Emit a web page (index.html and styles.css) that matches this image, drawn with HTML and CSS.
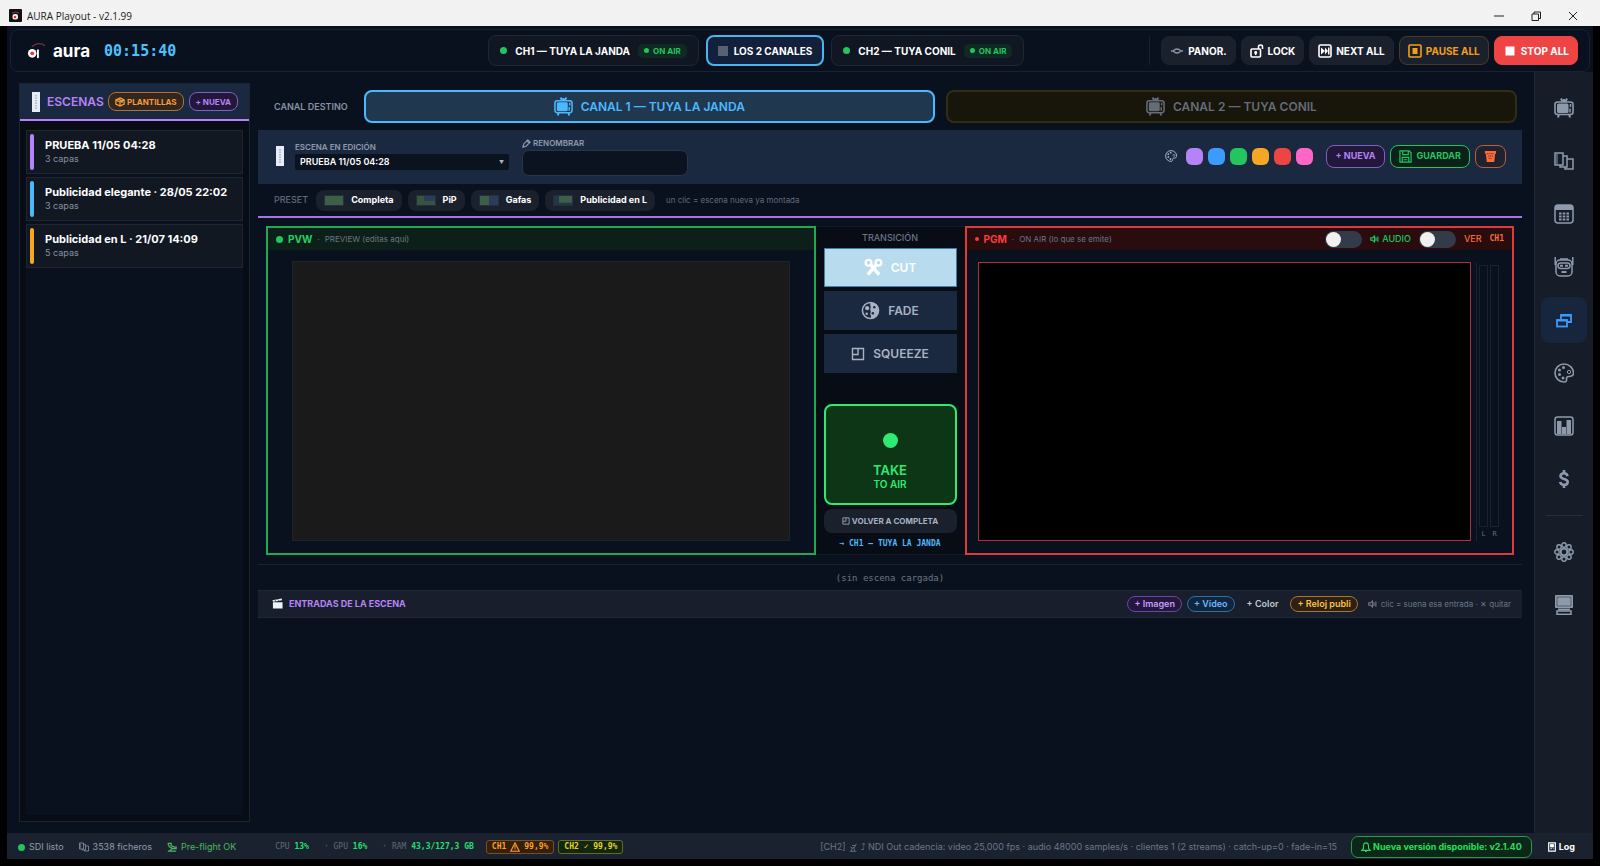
FILE: index.html
```html
<!DOCTYPE html>
<html lang="es">
<head>
  <meta charset="UTF-8">
  <title>AURA Playout - v2.1.99</title>
  <link rel="stylesheet" href="styles.css">
</head>
<body>
  <!-- Icon set -->
  <svg class="icon-set" aria-hidden="true">
    <symbol id="i-tv" viewBox="0 0 20 20">
      <path d="M7 .5l1.500 3M13 .5l-1.500 3M10 1v3M5 16l-1 3.500M15 16l1 3.500" fill="none" stroke="currentColor" stroke-width="2"/>
      <rect x="1" y="4" width="18" height="12.500" rx="2.500" fill="none" stroke="currentColor" stroke-width="1.600"/>
      <rect x="3" y="5.500" width="11.500" height="9.500" rx="1.500" fill="currentColor"/>
      <path d="M16.500 6v3M16 10.500v4" stroke="currentColor" stroke-width="1.500"/>
    </symbol>
    <symbol id="i-layers" viewBox="0 0 20 20">
      <path d="M1 2h8v12H1zM9 5h4v11H6v-2M13 8h6v10h-8v-2" fill="none" stroke="currentColor" stroke-width="1.500"/>
      <path d="M3 3v10" stroke="currentColor"/>
    </symbol>
    <symbol id="i-calendar" viewBox="0 0 20 20">
      <rect x="1" y="1" width="18" height="18" rx="3" fill="none" stroke="currentColor" stroke-width="1.500"/>
      <path d="M1 3q0-2 2-2h14q2 0 2 2v3H1z" fill="currentColor"/>
      <path d="M5 9.500h10M5 12.500h10M5 15.500h10" stroke="currentColor" stroke-width="2.200" stroke-dasharray="2.600 1.100"/>
    </symbol>
    <symbol id="i-robot" viewBox="0 0 20 20">
      <path d="M1.200 0v8M18.800 0v8M6 2h8" fill="none" stroke="currentColor" stroke-width="1.500"/>
      <rect x="2" y="3" width="16" height="16" rx="4" fill="none" stroke="currentColor" stroke-width="1.500"/>
      <rect x="4" y="6" width="12" height="5.500" rx="2.700" fill="none" stroke="currentColor" stroke-width="1.500"/>
      <path d="M6 8.700h3M11 8.700h3M7.500 15h5" stroke="currentColor" stroke-width="2"/>
    </symbol>
    <symbol id="i-windows" viewBox="0 0 20 20">
      <path d="M7 9V5h10v7h-4" fill="none" stroke="currentColor" stroke-width="1.800"/>
      <rect x="3" y="10" width="10" height="6.500" fill="none" stroke="currentColor" stroke-width="1.800"/>
      <path d="M7 5.500h10M3 10.500h10" stroke="currentColor" stroke-width="2"/>
    </symbol>
    <symbol id="i-palette" viewBox="0 0 20 20">
      <path d="M10 1C5 1 1 5 1 10s4 9 9 9c3 0 2.500-2 2.500-3.500 0-1.500 1-2 2.500-2 3 0 4.500-1.500 4.500-3.500C19.500 5 15 1 10 1z" fill="none" stroke="currentColor" stroke-width="1.600"/>
      <g fill="currentColor"><circle cx="5.500" cy="7" r="1.500"/><circle cx="9.500" cy="4.500" r="1.500"/><circle cx="5.500" cy="11.500" r="1.500"/><circle cx="9" cy="15" r="1.500"/></g>
      <circle cx="15" cy="9" r="1.700" fill="none" stroke="currentColor"/>
    </symbol>
    <symbol id="i-chart" viewBox="0 0 20 20">
      <rect x="1" y="1" width="18" height="18" rx="2.500" fill="none" stroke="currentColor" stroke-width="1.500"/>
      <path d="M3 5h4.500v13H3zM8 11h4v7H8zM12.500 4H17v14h-4.500z" fill="currentColor"/>
    </symbol>
    <symbol id="i-dollar" viewBox="0 0 20 20">
      <path d="M13.500 7.200c-.3-2-1.600-3-3.500-3S6.500 5.200 6.500 7c0 4 7.200 2 7.200 6 0 2-1.700 2.900-3.700 2.900s-3.500-1-3.800-3M10 1v3M10 16v3" fill="none" stroke="currentColor" stroke-width="2.600"/>
    </symbol>
    <symbol id="i-gear" viewBox="0 0 20 20">
      <circle cx="10" cy="10" r="3.300" fill="none" stroke="currentColor" stroke-width="1.800"/>
      <g fill="none" stroke="currentColor" stroke-width="1.400"><circle cx="10" cy="3" r="2.200"/><circle cx="15" cy="5" r="2.200"/><circle cx="17" cy="10" r="2.200"/><circle cx="15" cy="15" r="2.200"/><circle cx="10" cy="17" r="2.200"/><circle cx="5" cy="15" r="2.200"/><circle cx="3" cy="10" r="2.200"/><circle cx="5" cy="5" r="2.200"/></g>
    </symbol>
    <symbol id="i-computer" viewBox="0 0 20 20">
      <rect x="1" y="0" width="18" height="13" rx="1" fill="currentColor"/>
      <path d="M3 2h14v9H3z" fill="none" stroke="#161c28" stroke-width=".5"/>
      <path d="M4 13.500h12v2H4z" fill="currentColor"/>
      <rect x="3" y="16" width="14" height="3.300" fill="none" stroke="currentColor" stroke-width="1.500"/>
    </symbol>
    <symbol id="i-scene" viewBox="0 0 8 20">
      <rect width="8" height="20" fill="#e6edf6"/>
      <path d="M4 3v14" stroke="#b4c0d0" stroke-width="2" stroke-dasharray="1.500 1"/>
    </symbol>
    <symbol id="i-box" viewBox="0 0 12 12">
      <path d="M6 1l5 2.500v5L6 11 1 8.500v-5zM1 3.500L6 6l5-2.500M6 6v5M3.500 2.300l5 2.500v2.500" fill="none" stroke="currentColor" stroke-width="1.500"/>
    </symbol>
    <symbol id="i-view" viewBox="0 0 14 14">
      <path d="M1 7h2q4-4 8 0h2M3 7q4 4 8 0" fill="none" stroke="currentColor" stroke-width="1.300"/>
    </symbol>
    <symbol id="i-lock" viewBox="0 0 14 14">
      <rect x="1" y="5" width="9.500" height="8" rx="1" fill="none" stroke="currentColor" stroke-width="1.600"/>
      <path d="M8.500 5V2.500q0-1.500 2-1.500t2 1.500V5M5.700 7v4" fill="none" stroke="currentColor" stroke-width="1.500"/>
      <circle cx="5.700" cy="8.500" r="1.500" fill="currentColor"/>
    </symbol>
    <symbol id="i-next" viewBox="0 0 14 14">
      <rect x="1" y="1" width="12" height="12" rx="1.500" fill="none" stroke="currentColor" stroke-width="1.600"/>
      <path d="M3 3.500L7 7l-4 3.500zM7 3.500L10 7l-3 3.500zM10 3.500h1.500v7H10z" fill="currentColor"/>
    </symbol>
    <symbol id="i-pause" viewBox="0 0 14 14">
      <rect x="1" y="1" width="12" height="12" rx="1" fill="none" stroke="currentColor" stroke-width="1.600"/>
      <path d="M4.500 4h5v6h-5z" fill="currentColor"/>
    </symbol>
    <symbol id="i-stop" viewBox="0 0 14 14"><path d="M2.500 2.500h9v9h-9z" fill="currentColor"/></symbol>
    <symbol id="i-pencil" viewBox="0 0 10 10">
      <path d="M1 9l1-3.500 4.500-4.500 2.500 2.500L4.500 8z M5.500 2L8 4.500" fill="none" stroke="currentColor" stroke-width="1.300"/>
    </symbol>
    <symbol id="i-save" viewBox="0 0 14 14">
      <path d="M1 1h10l2 2v10H1zM4 1v4h6V1M3.500 13V8h7v5M5 10.500h4" fill="none" stroke="currentColor" stroke-width="1.300"/>
    </symbol>
    <symbol id="i-trash" viewBox="0 0 14 14">
      <path d="M1 1h12v3h-1l-1 9H3L2 4H1z" fill="currentColor"/>
      <path d="M4.500 6.500h5M5 9h4M3 4h8" stroke="#20222f" stroke-width=".8" stroke-dasharray="1.200 .8"/>
    </symbol>
    <symbol id="i-scissors" viewBox="0 0 20 20">
      <g fill="none" stroke="currentColor" stroke-width="2.400"><circle cx="4.800" cy="5" r="3"/><circle cx="15.200" cy="5" r="3"/><path d="M7 7l9 10.500M13 7L4 17.500" stroke-width="3.600"/></g>
    </symbol>
    <symbol id="i-moon" viewBox="0 0 20 20">
      <circle cx="10" cy="10" r="8.500" fill="none" stroke="currentColor" stroke-width="1.600"/>
      <path d="M10 1.500a8.500 8.500 0 010 17c2-3-1-4 0-6s-1-3 0-5-1-3 0-6z" fill="currentColor"/>
      <circle cx="6.500" cy="7.500" r="2.200" fill="currentColor"/><circle cx="6" cy="13.500" r="1.300" fill="currentColor"/>
      <g fill="#1b2940"><circle cx="14" cy="6.500" r="1.300"/><circle cx="12.500" cy="13" r="1.300"/></g>
    </symbol>
    <symbol id="i-squeeze" viewBox="0 0 14 14">
      <path d="M1.500 1.500h11v11h-11zM1.500 7.500h5.500v-6" fill="none" stroke="currentColor" stroke-width="1.400"/>
    </symbol>
    <symbol id="i-speaker" viewBox="0 0 12 10">
      <path d="M1 3.500h2L6 1v8L3 6.500H1zM8 2.500v5M10.500 1.500v7" fill="none" stroke="currentColor" stroke-width="1.500"/>
    </symbol>
    <symbol id="i-clapper" viewBox="0 0 12 12">
      <path d="M1 4.500h10.500v7H1zM.500 2.500L10.500.500l.5 2L1 4z" fill="#eef3fa"/>
      <path d="M3 2l1.500 1.800M6 1.300l1.500 1.800" stroke="#5c6880"/>
    </symbol>
    <symbol id="i-plane" viewBox="0 0 12 12">
      <path d="M1 1.500h4v3l4 1.500h2v2H7L3 6M1 2l2 4M1 11h10M6 8l-3 3" fill="none" stroke="currentColor" stroke-width="1.500"/>
    </symbol>
    <symbol id="i-signal" viewBox="0 0 12 12">
      <path d="M2 10h8M4 10l1-4M3 5q2 2 5 0l2-4M5 3h4M7 5l1 5" fill="none" stroke="currentColor"/>
    </symbol>
    <symbol id="i-bell" viewBox="0 0 12 12">
      <path d="M1 10h10L9 7.500V5Q9 1 6 1T3 5v2.500zM5 11.300h2" fill="none" stroke="currentColor" stroke-width="1.300"/>
    </symbol>
    <symbol id="i-warn" viewBox="0 0 12 12">
      <path d="M6 1l5 10H1zM6 4v4M6 9v1" fill="none" stroke="currentColor" stroke-width="1.300"/>
    </symbol>
    <symbol id="i-log" viewBox="0 0 10 12">
      <path d="M1 1h8v10H1z" fill="none" stroke="currentColor" stroke-width="1.400"/>
      <path d="M3 3h4v3H3zM3 8h2M6 8h1" stroke="currentColor" fill="currentColor"/>
    </symbol>
  </svg>

  <!-- Window title bar -->
  <div class="titlebar">
    <svg class="title-icon" viewBox="0 0 13 13"><rect width="13" height="13" rx="1" fill="#111"/><path d="M3 4q4-2 7 0" fill="none" stroke="#a33"/><rect x="3.500" y="5" width="5.500" height="5.500" rx="2" fill="#eee"/><circle cx="6" cy="8" r="1.300" fill="#d33"/></svg>
    <span class="title-text">AURA Playout - v2.1.99</span>
    <div class="window-buttons">
      <button aria-label="Minimizar"><svg viewBox="0 0 10 10"><path d="M0 5h10"/></svg></button>
      <button aria-label="Restaurar"><svg viewBox="0 0 10 10"><path d="M1 3h6.500v6.500H1zM3 3V1h6.500v6.500h-2"/></svg></button>
      <button aria-label="Cerrar"><svg viewBox="0 0 10 10"><path d="M1 1l8 8M9 1l-8 8"/></svg></button>
    </div>
  </div>

  <div class="app">
    <header class="topbar">
      <div class="brand">
        <svg class="logo" viewBox="0 0 20 20"><path d="M5 6q7-6 14-1" fill="none" stroke="#7c2f34" stroke-width="1.300"/><circle cx="5.500" cy="13" r="4.500" fill="#fff"/><circle cx="5.500" cy="13" r="2" fill="#e23b3b"/><path d="M11.500 9v9" stroke="#fff" stroke-width="2"/></svg>
        <span class="brand-name">aura</span>
        <span class="clock">00:15:40</span>
      </div>
      <nav class="channels">
        <button class="channel-tab"><i class="dot"></i>CH1 — TUYA LA JANDA<span class="on-air"><i></i>ON AIR</span></button>
        <button class="channel-tab active"><i class="square"></i>LOS 2 CANALES</button>
        <button class="channel-tab"><i class="dot"></i>CH2 — TUYA CONIL<span class="on-air"><i></i>ON AIR</span></button>
      </nav>
      <div class="actions">
        <button class="action"><svg class="dim"><use href="#i-view"/></svg>PANOR.</button>
        <button class="action"><svg><use href="#i-lock"/></svg>LOCK</button>
        <button class="action"><svg><use href="#i-next"/></svg>NEXT ALL</button>
        <button class="action pause"><svg><use href="#i-pause"/></svg>PAUSE ALL</button>
        <button class="action stop"><svg><use href="#i-stop"/></svg>STOP ALL</button>
      </div>
    </header>

    <div class="workspace">
      <!-- Scene list -->
      <aside class="scenes">
        <div class="scenes-header">
          <svg class="scene-icon"><use href="#i-scene"/></svg>
          <h2>ESCENAS</h2>
          <button class="pill orange"><svg><use href="#i-box"/></svg>PLANTILLAS</button>
          <button class="pill purple">+ NUEVA</button>
        </div>
        <div class="scene-list">
          <button class="scene-card"><i class="bar bar-purple"></i><span><b>PRUEBA 11/05 04:28</b><small>3 capas</small></span></button>
          <button class="scene-card"><i class="bar bar-blue"></i><span><b>Publicidad elegante · 28/05 22:02</b><small>3 capas</small></span></button>
          <button class="scene-card"><i class="bar bar-amber"></i><span><b>Publicidad en L · 21/07 14:09</b><small>5 capas</small></span></button>
        </div>
      </aside>

      <main class="editor">
        <div class="target-row">
          <span class="target-label">CANAL DESTINO</span>
          <button class="target target-on"><svg><use href="#i-tv"/></svg>CANAL 1 — TUYA LA JANDA</button>
          <button class="target target-off"><svg><use href="#i-tv"/></svg>CANAL 2 — TUYA CONIL</button>
        </div>

        <div class="scene-bar">
          <svg class="scene-icon"><use href="#i-scene"/></svg>
          <div class="field field-scene">
            <label for="scene">ESCENA EN EDICIÓN</label>
            <div class="select-wrap">
              <select id="scene"><option>PRUEBA 11/05 04:28</option></select>
            </div>
          </div>
          <div class="field field-name">
            <label for="rename"><svg><use href="#i-pencil"/></svg>RENOMBRAR</label>
            <input id="rename" type="text">
          </div>
          <div class="swatches">
            <svg><use href="#i-palette"/></svg>
            <button class="swatch bg-purple" aria-label="Morado"></button>
            <button class="swatch bg-blue" aria-label="Azul"></button>
            <button class="swatch bg-green" aria-label="Verde"></button>
            <button class="swatch bg-amber" aria-label="Naranja"></button>
            <button class="swatch bg-red" aria-label="Rojo"></button>
            <button class="swatch bg-pink" aria-label="Rosa"></button>
          </div>
          <div class="scene-actions">
            <button class="tool purple">+ NUEVA</button>
            <button class="tool green"><svg><use href="#i-save"/></svg>GUARDAR</button>
            <button class="tool red" aria-label="Borrar"><svg><use href="#i-trash"/></svg></button>
          </div>
        </div>

        <div class="preset-row">
          <span class="preset-label">PRESET</span>
          <button class="preset"><i class="thumb thumb-full"></i>Completa</button>
          <button class="preset"><i class="thumb thumb-pip"></i>PiP</button>
          <button class="preset"><i class="thumb thumb-split"></i>Gafas</button>
          <button class="preset"><i class="thumb thumb-l"></i>Publicidad en L</button>
          <span class="hint">un clic = escena nueva ya montada</span>
        </div>

        <!-- Preview / transition / program -->
        <div class="studio">
          <section class="monitor preview">
            <div class="monitor-head"><i class="dot"></i><strong>PVW</strong><span>·</span><span>PREVIEW (editas aquí)</span></div>
            <div class="monitor-body"><div class="screen"></div></div>
          </section>

          <section class="transition">
            <span class="transition-label">TRANSICIÓN</span>
            <button class="mode selected"><svg><use href="#i-scissors"/></svg>CUT</button>
            <button class="mode"><svg><use href="#i-moon"/></svg>FADE</button>
            <button class="mode"><svg class="small"><use href="#i-squeeze"/></svg>SQUEEZE</button>
            <button class="take"><i></i><b>TAKE</b><span>TO AIR</span></button>
            <button class="back"><svg><use href="#i-squeeze"/></svg>VOLVER A COMPLETA</button>
            <span class="route">→ CH1 — TUYA LA JANDA</span>
          </section>

          <section class="monitor program">
            <div class="monitor-head">
              <i class="dot"></i><strong>PGM</strong><span>·</span><span>ON AIR (lo que se emite)</span>
              <div class="switches">
                <input type="checkbox" class="switch" id="audio">
                <label for="audio" class="audio-label"><svg><use href="#i-speaker"/></svg>AUDIO</label>
                <input type="checkbox" class="switch" id="ver">
                <label for="ver">VER</label>
                <span class="channel-tag">CH1</span>
              </div>
            </div>
            <div class="monitor-body">
              <div class="screen"></div>
              <div class="meters">
                <div class="meter"><i></i>L</div>
                <div class="meter"><i></i>R</div>
              </div>
            </div>
          </section>
        </div>

        <p class="empty">(sin escena cargada)</p>

        <div class="inputs-bar">
          <svg class="clapper"><use href="#i-clapper"/></svg>
          <h3>ENTRADAS DE LA ESCENA</h3>
          <button class="chip purple">+ Imagen</button>
          <button class="chip blue">+ Vídeo</button>
          <button class="chip plain">+ Color</button>
          <button class="chip amber">+ Reloj publi</button>
          <span class="inputs-hint"><svg><use href="#i-speaker"/></svg>clic = suena esa entrada · ✕ quitar</span>
        </div>
      </main>

      <nav class="sidebar">
        <button aria-label="Emisión"><svg><use href="#i-tv"/></svg></button>
        <button aria-label="Ficheros"><svg><use href="#i-layers"/></svg></button>
        <button aria-label="Calendario"><svg><use href="#i-calendar"/></svg></button>
        <button aria-label="Automático"><svg><use href="#i-robot"/></svg></button>
        <button aria-label="Escenas" class="current"><svg><use href="#i-windows"/></svg></button>
        <button aria-label="Diseño"><svg><use href="#i-palette"/></svg></button>
        <button aria-label="Informes"><svg><use href="#i-chart"/></svg></button>
        <button aria-label="Publicidad"><svg><use href="#i-dollar"/></svg></button>
        <hr>
        <button aria-label="Ajustes"><svg><use href="#i-gear"/></svg></button>
        <button aria-label="Equipo"><svg><use href="#i-computer"/></svg></button>
      </nav>
    </div>

    <footer class="statusbar">
      <div class="status-left">
        <span><i class="dot"></i>SDI listo</span>
        <span><svg><use href="#i-layers"/></svg>3538 ficheros</span>
        <span class="preflight"><svg><use href="#i-plane"/></svg>Pre-flight OK</span>
      </div>
      <div class="usage">
        <span>CPU <b>13%</b></span>
        <span>· GPU <b>16%</b></span>
        <span>· RAM <b>43,3/127,3 GB</b></span>
      </div>
      <div class="health">
        <span class="health-tag warn">CH1 <svg><use href="#i-warn"/></svg> 99,9%</span>
        <span class="health-tag ok">CH2 ✓ 99,9%</span>
      </div>
      <span class="log-line">[CH2] <svg><use href="#i-signal"/></svg> ⤴ NDI Out cadencia: video 25,000 fps · audio 48000 samples/s · clientes 1 (2 streams) · catch-up=0 · fade-in=15</span>
      <button class="update"><svg><use href="#i-bell"/></svg>Nueva versión disponible: v2.1.40</button>
      <button class="log-button"><svg><use href="#i-log"/></svg>Log</button>
    </footer>
  </div>
</body>
</html>
```
FILE: styles.css
```css
* {
  box-sizing: border-box;
}
body {
  margin: 0;
  min-height: 100vh;
  display: flex;
  flex-direction: column;
  background: #000;
  color: #fff;
  font-family: Inter, "Liberation Sans", sans-serif;
  font-size: 11px;
  line-height: 14px;
}
button,
input,
select {
  font: inherit;
  color: inherit;
  margin: 0;
}
button {
  cursor: pointer;
  display: flex;
  align-items: center;
  justify-content: center;
  border: none;
  background: none;
  padding: 0;
  white-space: nowrap;
}
svg {
  flex: none;
}
.icon-set {
  display: none;
}
.dot {
  width: 7px;
  height: 7px;
  flex: none;
  border-radius: 50%;
  background: #22c55e;
}

/* Window title bar */
.titlebar {
  height: 26px;
  display: flex;
  align-items: center;
  gap: 5px;
  padding: 5px 22px 0 9px;
  background: #f2f2f2;
  color: #222;
  font-family: "Open Sans", sans-serif;
  font-size: 10px;
}
.title-icon {
  width: 13px;
  height: 13px;
}
.window-buttons {
  margin-left: auto;
  display: flex;
  gap: 27px;
}
.window-buttons svg {
  width: 10px;
  height: 10px;
  fill: none;
  stroke: #222;
}

.app {
  flex: 1;
  display: flex;
  flex-direction: column;
  margin: 0 7px 7px;
  background: #0a111e;
}

/* Top bar */
.topbar {
  height: 43px;
  margin: 3px 3px 0;
  padding: 0 11px 0 16px;
  display: grid;
  grid-template-columns: 5fr auto 6fr;
  align-items: center;
  border: 1px solid #1a2130;
  border-radius: 8px;
}
.brand {
  display: flex;
  align-items: center;
}
.logo {
  width: 19px;
  height: 19px;
}
.brand-name {
  margin-left: 7px;
  font-size: 17px;
  font-weight: 700;
}
.clock {
  margin-left: 14px;
  font-family: "DejaVu Sans Mono", monospace;
  font-size: 15px;
  font-weight: 700;
  color: #4cc2ff;
}
.channels {
  display: flex;
  gap: 7px;
}
.channel-tab {
  height: 31px;
  padding: 0 11px;
  gap: 8px;
  border: 1px solid #1f2733;
  border-radius: 8px;
  background: #111722;
  font-size: 10px;
  font-weight: 700;
}
.channel-tab.active {
  gap: 6px;
  padding: 0 10px;
  border: 2px solid #4cb4ec;
  background: #12203c;
}
.square {
  width: 10px;
  height: 10px;
  background: #566274;
}
.on-air {
  display: flex;
  align-items: center;
  gap: 4px;
  padding: 0 6px;
  border-radius: 5px;
  background: #0f2a22;
  color: #22c55e;
  font-size: 8px;
  font-weight: 700;
}
.on-air i {
  width: 5px;
  height: 5px;
  border-radius: 50%;
  background: #22c55e;
}
.actions {
  justify-self: end;
  display: flex;
  gap: 5px;
  padding-left: 11px;
  border-left: 1px solid #1a2130;
}
.action {
  height: 29px;
  padding: 0 8px;
  gap: 4px;
  border: 1px solid #1b222e;
  border-radius: 8px;
  background: #1a212d;
  font-size: 10px;
  font-weight: 700;
}
.action svg {
  width: 14px;
  height: 14px;
}
.action .dim {
  color: #8a94a5;
}
.action.pause {
  border-color: #4b3a22;
  color: #f59e1b;
}
.action.stop {
  border-color: #ef4444;
  background: #ef4444;
}

.workspace {
  flex: 1;
  display: flex;
}

/* Scene list */
.scenes {
  width: 231px;
  flex: none;
  margin: 11px 8px 11px 12px;
  display: flex;
  flex-direction: column;
  border: 1px solid #1c2431;
  background: #070c15;
}
.scenes-header {
  height: 37px;
  padding: 0 11px 0 12px;
  display: flex;
  align-items: center;
  background: #1b2940;
  border-bottom: 2px solid #b583f7;
}
.scenes-header h2 {
  margin: 0 auto 0 7px;
  font-size: 12px;
  font-weight: 600;
  color: #b583f7;
}
.scene-icon {
  width: 8px;
  height: 20px;
}
.pill {
  height: 19px;
  padding: 0 6px;
  gap: 2px;
  border: 1px solid;
  border-radius: 8px;
  font-size: 8px;
  font-weight: 700;
}
.pill + .pill {
  margin-left: 5px;
}
.pill svg {
  width: 10px;
  height: 10px;
}
.orange {
  color: #f79a3a;
  background: #33261c;
  border-color: #a9733a;
}
.purple {
  color: #b583f7;
  background: #23183c;
  border-color: #8160bd;
}
.scene-list {
  flex: 1;
  display: flex;
  flex-direction: column;
  gap: 3px;
  margin: 9px 6px 6px;
  background: #0a111e;
}
.scene-card {
  height: 44px;
  padding: 3px;
  gap: 11px;
  justify-content: flex-start;
  align-items: stretch;
  border: 1px solid #1e2531;
  background: #121822;
  text-align: left;
}
.scene-card span {
  display: flex;
  flex-direction: column;
  padding-top: 4px;
}
.scene-card b {
  font-size: 11px;
  font-weight: 700;
}
.scene-card small {
  font-size: 9px;
  color: #8791a3;
}
.bar {
  width: 4px;
  border-radius: 2px;
}
.bar-purple,
.bg-purple { background: #b583f7; }
.bar-blue { background: #4cb8f5; }
.bar-amber,
.bg-amber { background: #f5a623; }
.bg-blue { background: #3b9bff; }
.bg-green { background: #22c55e; }
.bg-red { background: #ef4444; }
.bg-pink { background: #ff66c8; }

/* Editor */
.editor {
  flex: 1;
  min-width: 0;
  padding: 11px 12px 0 0;
}
.target-row {
  display: flex;
  align-items: center;
  gap: 11px;
  padding: 7px 5px 7px 16px;
}
.target-label {
  margin-right: 5px;
  font-size: 9px;
  font-weight: 600;
  color: #8791a3;
}
.target {
  flex: 1;
  height: 33px;
  gap: 8px;
  border: 2px solid;
  border-radius: 8px;
  font-size: 12px;
  font-weight: 600;
}
.target svg {
  width: 19px;
  height: 19px;
}
.target-on {
  color: #4cb8ff;
  background: #1f3850;
}
.target-off {
  color: #646c78;
  background: #18150b;
  border-color: #312d14;
}
.scene-bar {
  height: 54px;
  padding: 0 16px 2px 18px;
  display: flex;
  align-items: center;
  background: #1b2940;
}
.field {
  display: flex;
  flex-direction: column;
}
.field label {
  display: flex;
  align-items: center;
  gap: 2px;
  height: 14px;
  font-size: 8px;
  font-weight: 600;
  color: #8f9bad;
}
.field label svg {
  width: 9px;
  height: 9px;
}
.field-scene {
  width: 214px;
  margin: 0 13px 0 11px;
  padding-bottom: 2px;
}
.field-name {
  width: 166px;
}
.select-wrap {
  position: relative;
}
.select-wrap::after {
  content: "▼";
  position: absolute;
  right: 5px;
  top: 1px;
  font-size: 5px;
  color: #a8b2c2;
  pointer-events: none;
}
select {
  appearance: none;
  width: 100%;
  height: 16px;
  padding: 0 5px;
  border: none;
  border-radius: 2px;
  background: #0b1220;
  font-size: 9px;
  font-weight: 600;
  line-height: 16px;
  display: block;
}
#rename {
  height: 26px;
  padding: 0 8px;
  border: 1px solid #2a3547;
  border-radius: 7px;
  background: #0b1220;
}
.swatches {
  margin-left: auto;
  display: flex;
  align-items: center;
  gap: 5px;
}
.swatches svg {
  width: 12px;
  height: 12px;
  margin-right: 4px;
  color: #a8b2c2;
}
.swatch {
  width: 17px;
  height: 17px;
  border-radius: 6px;
}
.scene-actions {
  display: flex;
  gap: 5px;
  margin-left: 13px;
}
.tool {
  height: 23px;
  padding: 0 8px;
  gap: 4px;
  border: 1px solid;
  border-radius: 8px;
  font-size: 9px;
  font-weight: 700;
}
.tool svg {
  width: 13px;
  height: 13px;
}
.tool.purple {
  padding: 0 9px;
  border-color: #8160bd;
}
.tool.green {
  color: #22c55e;
  background: #0c2119;
}
.tool.red {
  color: #ff6b35;
  background: #20222f;
  border-color: #b5603e;
}

.preset-row {
  height: 34px;
  padding: 0 16px;
  display: flex;
  align-items: center;
  gap: 6px;
  border-bottom: 2px solid #a873ea;
}
.preset-label {
  margin-right: 2px;
  font-size: 9px;
  font-weight: 500;
  color: #5f6a7b;
}
.preset {
  height: 21px;
  padding: 0 8px;
  gap: 7px;
  border-radius: 8px;
  background: #1a212d;
  font-size: 9px;
  font-weight: 700;
}
.thumb {
  width: 20px;
  height: 11px;
  border: 1px solid #22303d;
}
.thumb-full { background: #3d5f45; }
.thumb-pip { background: linear-gradient(#2c3a5c, #2c3a5c) right top / 60% 60% no-repeat #36553f; }
.thumb-split { background: linear-gradient(90deg, #3d5f45 50%, #2c3a5c 50%); }
.thumb-l { background: linear-gradient(#3d5f45, #3d5f45) right top / 75% 75% no-repeat #24344c; }
.hint {
  margin-left: 5px;
  font-size: 8px;
  color: #5f6a7b;
}

/* Monitors */
.studio {
  display: grid;
  grid-template-columns: 1fr 149px 1fr;
  padding: 8px 8px 9px;
  border-bottom: 1px solid #1a2130;
}
.monitor {
  display: flex;
  flex-direction: column;
  border: 2px solid #22a852;
}
.monitor-head {
  height: 22px;
  padding: 0 8px;
  display: flex;
  align-items: center;
  gap: 5px;
  background: #0c1f18;
  font-size: 8px;
  color: #6b7687;
}
.monitor-head strong {
  font-size: 10px;
  font-weight: 700;
  color: #22d35f;
}
.monitor-body {
  flex: 1;
  display: flex;
  padding: 11px 24px 12px;
}
.preview .screen {
  width: 100%;
  aspect-ratio: 16 / 9;
  background: #1a1a1a;
  border: 1px solid #1c2428;
}
.program {
  border-color: #e0383c;
}
.program .dot {
  width: 4px;
  height: 4px;
  background: #ff3b3b;
}
.program .monitor-head {
  background: #280c0e;
}
.program .monitor-head strong {
  color: #ff3b3b;
}
.program .monitor-body {
  padding: 12px 13px 12px 11px;
}
.program .screen {
  flex: 1;
  background: #000;
  border: 1px solid #a83238;
}
.switches {
  margin-left: auto;
  display: flex;
  align-items: center;
  gap: 8px;
  color: #ff6b35;
}
.switches label {
  display: flex;
  align-items: center;
  gap: 3px;
  font-size: 9px;
  font-weight: 500;
}
.switches .audio-label {
  color: #22c55e;
}
.switches svg {
  width: 9px;
  height: 8px;
}
.switch {
  appearance: none;
  width: 37px;
  height: 17px;
  padding: 1px;
  border-radius: 9px;
  background: #333b4a;
}
.switch::before {
  content: "";
  display: block;
  width: 15px;
  height: 15px;
  border-radius: 50%;
  background: #f0f0f0;
}
.switch:checked::before {
  margin-left: auto;
}
.channel-tag {
  font-family: "DejaVu Sans Mono", monospace;
  font-size: 8px;
  font-weight: 700;
}
.meters {
  display: flex;
  gap: 2px;
  margin-left: 5px;
  padding: 3px 0 0 2px;
  border-left: 1px solid #1a2130;
}
.meter {
  width: 9px;
  display: flex;
  flex-direction: column;
  align-items: center;
  font-family: "DejaVu Sans Mono", monospace;
  font-size: 7px;
  color: #5f6a7b;
}
.meter i {
  flex: 1;
  width: 100%;
  border: 1px solid #1a2130;
}

/* Transition column */
.transition {
  display: flex;
  flex-direction: column;
  align-items: stretch;
  gap: 4px;
  padding: 4px 8px 3px;
  background: #070c15;
  border: 1px solid #131a27;
  border-width: 1px 0;
  text-align: center;
}
.transition-label {
  line-height: 13px;
  font-size: 9px;
  font-weight: 500;
  color: #6b7687;
}
.mode {
  height: 39px;
  gap: 8px;
  background: #1b2940;
  color: #a8b2c2;
  font-size: 12px;
  font-weight: 600;
}
.mode svg {
  width: 19px;
  height: 19px;
}
.mode .small {
  width: 14px;
  height: 14px;
}
.mode.selected {
  border: 1px solid #3f7fae;
  background: #b9dbee;
  color: #fff;
}
.take {
  height: 101px;
  margin-top: auto;
  padding-top: 15px;
  flex-direction: column;
  border: 2px solid #2eea72;
  border-radius: 8px;
  background: #0c3616;
  color: #2eea72;
}
.take i {
  width: 15px;
  height: 15px;
  margin-bottom: 15px;
  border-radius: 50%;
  background: #2eea72;
}
.take b {
  font-size: 13px;
  font-weight: 600;
}
.take span {
  font-size: 10px;
  font-weight: 600;
}
.back {
  height: 24px;
  gap: 2px;
  border-radius: 8px;
  background: #1a212d;
  color: #a8b2c2;
  font-size: 8px;
  font-weight: 700;
}
.back svg {
  width: 8px;
  height: 8px;
}
.route {
  font-family: "DejaVu Sans Mono", monospace;
  font-size: 8px;
  font-weight: 700;
  color: #4cb8ff;
}

.empty {
  margin: 0;
  padding: 6px 0 5px;
  text-align: center;
  font-family: "DejaVu Sans Mono", monospace;
  font-size: 9px;
  color: #6b7687;
}
.inputs-bar {
  height: 28px;
  padding: 0 11px 0 14px;
  display: flex;
  align-items: center;
  gap: 5px;
  background: #181e2b;
  border: 1px solid #1f2634;
  border-width: 1px 0;
}
.inputs-bar h3 {
  margin: 0 auto 0 1px;
  font-size: 9px;
  font-weight: 700;
  color: #b583f7;
}
.clapper {
  width: 11px;
  height: 11px;
}
.chip {
  height: 16px;
  padding: 0 6px;
  border: 1px solid;
  border-radius: 8px;
  font-size: 9px;
  font-weight: 600;
}
.chip.purple {
  border-color: #6a45a8;
  color: #c79bff;
}
.chip.blue {
  border-color: #2f6fa8;
  background: #10263f;
  color: #6db8ff;
}
.chip.plain {
  border-color: transparent;
  color: #c3cad5;
}
.chip.amber {
  border-color: #a9772a;
  background: #2c2112;
  color: #ffc04d;
}
.inputs-hint {
  display: flex;
  align-items: center;
  gap: 4px;
  margin-left: 5px;
  font-size: 8px;
  color: #6b7687;
}
.inputs-hint svg {
  width: 9px;
  height: 8px;
}

/* Right navigation */
.sidebar {
  width: 59px;
  flex: none;
  display: flex;
  flex-direction: column;
  align-items: center;
  gap: 7px;
  padding-top: 13px;
  background: #161c28;
  border-left: 1px solid #1f2634;
}
.sidebar button {
  width: 46px;
  height: 46px;
  border-radius: 8px;
  color: #8e9aac;
}
.sidebar svg {
  width: 20px;
  height: 20px;
}
.sidebar .current {
  background: #17263c;
  color: #3b9bff;
}
.sidebar hr {
  width: 37px;
  margin: 6px 0;
  border: none;
  border-top: 1px solid #262e3b;
}

/* Status bar */
.statusbar {
  height: 26px;
  padding: 2px 18px 0 11px;
  display: flex;
  align-items: center;
  background: #1b222f;
  font-size: 9px;
  color: #8f9bad;
}
.statusbar svg {
  width: 10px;
  height: 10px;
}
.status-left {
  display: flex;
  gap: 15px;
}
.status-left span {
  display: flex;
  align-items: center;
  gap: 4px;
}
.status-left .preflight {
  color: #4fb560;
}
.usage {
  display: flex;
  gap: 15px;
  margin-left: 39px;
  font-family: "DejaVu Sans Mono", monospace;
  font-size: 8px;
  color: #5f6a7b;
}
.usage b {
  color: #22e06e;
}
.health {
  display: flex;
  gap: 4px;
  margin-left: 12px;
}
.health-tag {
  height: 14px;
  padding: 0 5px;
  display: flex;
  align-items: center;
  gap: 4px;
  border: 1px solid;
  border-radius: 3px;
  font-family: "DejaVu Sans Mono", monospace;
  font-size: 8px;
  font-weight: 700;
}
.warn {
  color: #ff9f1c;
  background: #33200f;
  border-color: #7a4e1c;
}
.ok {
  color: #e8d21d;
  background: #122713;
  border-color: #6a6a1c;
}
.log-line {
  margin-left: auto;
  white-space: nowrap;
  color: #6b7687;
}
.log-line svg {
  vertical-align: middle;
}
.update {
  height: 22px;
  margin: 0 15px 0 14px;
  padding: 0 9px;
  gap: 2px;
  border: 1px solid #279a4c;
  border-radius: 7px;
  background: #0c2619;
  color: #22e05e;
  font-weight: 700;
}
.log-button {
  gap: 2px;
  color: #fff;
  font-weight: 700;
}
```
